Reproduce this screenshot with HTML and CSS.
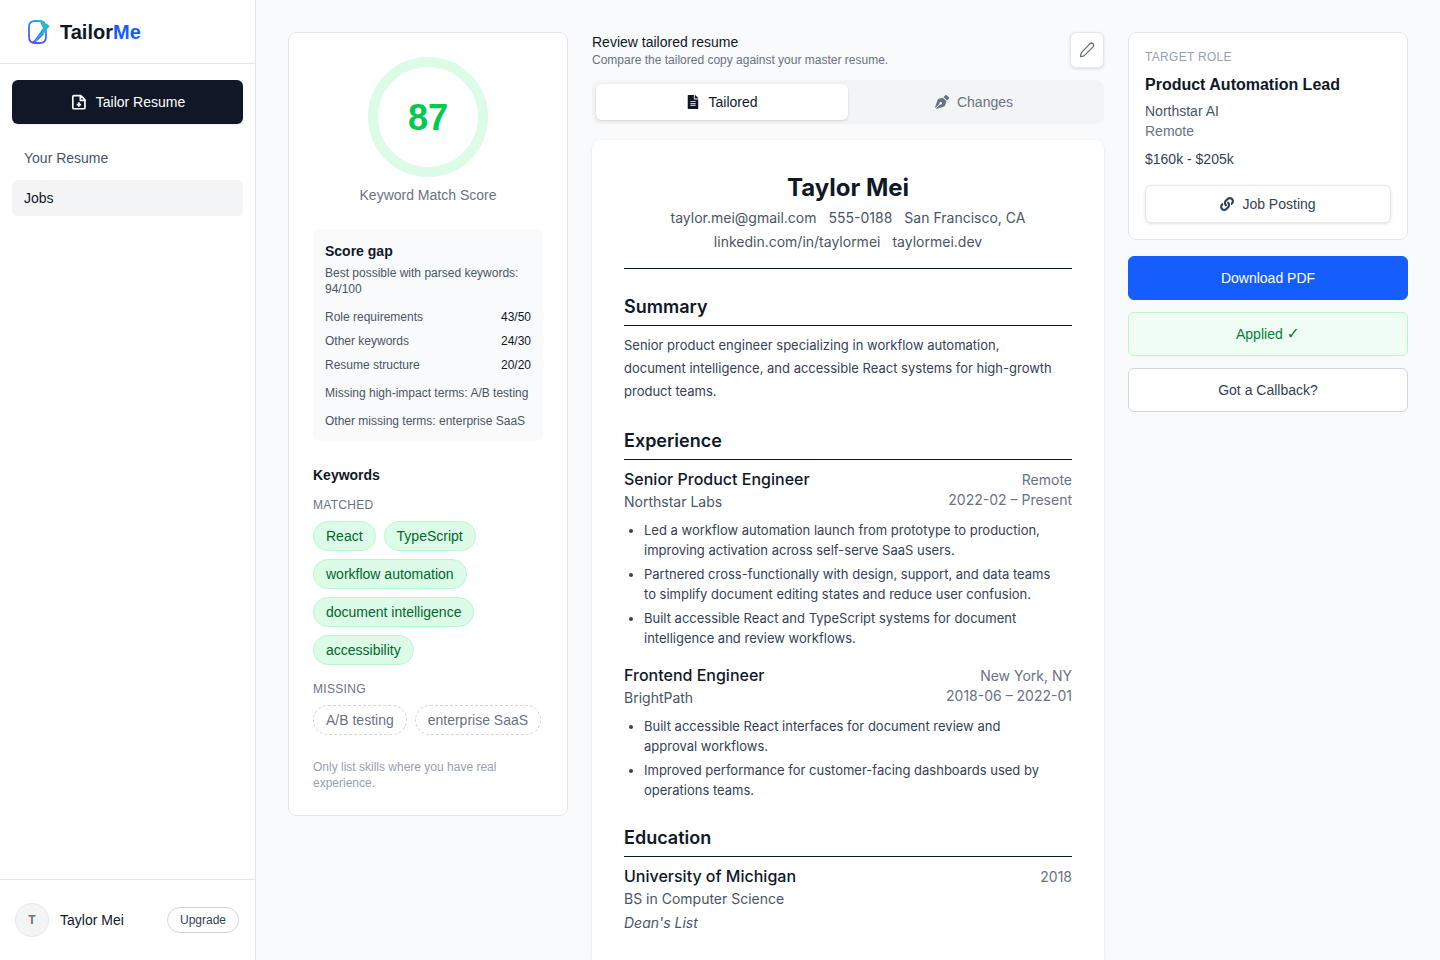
FILE: index.html
```html
<!DOCTYPE html>
<html lang="en">
<head>
<meta charset="utf-8">
<meta name="viewport" content="width=device-width, initial-scale=1">
<title>TailorMe</title>
<link rel="stylesheet" href="styles.css">
</head>
<body>
<div class="app">
  <aside class="sidebar">
    <a class="brand" href="#">
      <svg class="brand-mark" viewBox="0 0 26 26" fill="none" aria-hidden="true">
        <defs>
          <linearGradient id="page" x1="18" y1="2" x2="5" y2="24" gradientUnits="userSpaceOnUse"><stop stop-color="#22b8d8"/><stop offset=".45" stop-color="#2f7df6"/><stop offset="1" stop-color="#6246f5"/></linearGradient>
        </defs>
        <path d="M15 2H9Q3 2 3 8v9.500q0 6.500 6 6.500H14q6 0 6-6v-6.500" stroke="url(#page)" stroke-width="1.800"/>
        <path d="M13 1.100q5.500-.2 6.500 3.500l1.700.4 2.600 2.600-2.200 1.500-.6 2.200L14.500 18q-1.500 1.700-3 2.400L8 23l3-4.600L17 9z" fill="#22b8d8"/>
        <path d="M17 10.500 9.500 20.500q-2 2.700-4 2.800 3 .3 5.500-2l6.500-6.500" stroke="url(#page)" stroke-width="1.100"/>
      </svg>
      <span>Tailor<span class="brand-accent">Me</span></span>
    </a>
    <nav class="nav">
      <a class="nav-primary" href="#">
        <svg class="icon large" viewBox="0 0 16 16" fill="none" stroke="currentColor" stroke-width="1.500" stroke-linejoin="round" aria-hidden="true"><path d="M3.500 2.300h6.200L13.300 6v7a1 1 0 0 1-1 1H3.500a1 1 0 0 1-1-1V3.300a1 1 0 0 1 1-1zM9.200 2.500v4h4M7.900 8.300v4M5.900 10.300h4"/></svg>
        Tailor Resume
      </a>
      <a class="nav-link" href="#">Your Resume</a>
      <a class="nav-link active" href="#" aria-current="page">Jobs</a>
    </nav>
    <div class="account">
      <span class="avatar">T</span>
      <span class="account-name">Taylor Mei</span>
      <button class="upgrade" type="button">Upgrade</button>
    </div>
  </aside>

  <main class="main">
    <section class="card score-card">
      <div class="score-ring">87</div>
      <p class="score-label">Keyword Match Score</p>
      <div class="gap-box">
        <h3>Score gap</h3>
        <p>Best possible with parsed keywords: 94/100</p>
        <dl>
          <div><dt>Role requirements</dt><dd>43/50</dd></div>
          <div><dt>Other keywords</dt><dd>24/30</dd></div>
          <div><dt>Resume structure</dt><dd>20/20</dd></div>
        </dl>
        <p class="terms">Missing high-impact terms: A/B testing</p>
        <p class="terms">Other missing terms: enterprise SaaS</p>
      </div>
      <h3 class="keywords-title">Keywords</h3>
      <h4 class="eyebrow">MATCHED</h4>
      <ul class="chips">
        <li>React</li><li>TypeScript</li><li>workflow automation</li><li>document intelligence</li><li>accessibility</li>
      </ul>
      <h4 class="eyebrow">MISSING</h4>
      <ul class="chips missing"><li>A/B testing</li><li>enterprise SaaS</li></ul>
      <p class="note">Only list skills where you have real experience.</p>
    </section>

    <section class="review">
      <header class="review-head">
        <div>
          <h2>Review tailored resume</h2>
          <p>Compare the tailored copy against your master resume.</p>
        </div>
        <button class="edit" type="button" aria-label="Edit resume">
          <svg class="icon" viewBox="0 0 16 16" fill="none" stroke="currentColor" stroke-width="1.300" stroke-linecap="round" stroke-linejoin="round" aria-hidden="true"><path d="M11 1.800a2.150 2.150 0 0 1 3.100 3.100L5.500 13.400q-.5.500-1.200.7L1.500 14.700l.5-3q.2-.7.700-1.300z"/></svg>
        </button>
      </header>
      <div class="tabs" role="tablist">
        <button class="tab selected" type="button" role="tab" aria-selected="true">
          <svg class="icon small" viewBox="0 0 384 512" aria-hidden="true"><path fill="currentColor" fill-rule="evenodd" d="M224 136V0H24C10.700 0 0 10.700 0 24v464c0 13.300 10.700 24 24 24h336c13.300 0 24-10.700 24-24V160H248c-13.200 0-24-10.800-24-24zM96 224h192v32H96zm0 68h192v32H96zm0 68h192v32H96zM384 122v6H256V0h6c6.400 0 12.500 2.500 17 7l98 98c4.500 4.500 7 10.600 7 17z"/></svg>
          Tailored
        </button>
        <button class="tab" type="button" role="tab" aria-selected="false">
          <svg class="icon small" viewBox="0 0 512 512" aria-hidden="true"><path fill="currentColor" d="M136.600 138.790a64 64 0 0 0-43.310 41.350L0 460l14.690 14.690L164.640 324.740A48.700 48.700 0 0 1 160 304c0-26.510 21.490-48 48-48s48 21.490 48 48-21.490 48-48 48a48.700 48.700 0 0 1-20.740-4.640L37.310 497.310 52 512l279.860-93.290a64 64 0 0 0 41.350-43.310L416 224 288 96l-151.400 42.790zm361.340-64.620l-60.110-60.110c-18.750-18.750-49.160-18.750-67.910 0l-56.550 56.550 128.020 128.020 56.550-56.550c18.750-18.750 18.750-49.160 0-67.910z"/></svg>
          Changes
        </button>
      </div>

      <article class="resume">
        <header class="resume-head">
          <h1>Taylor Mei</h1>
          <div class="contact"><span>taylor.mei@gmail.com</span><span>555-0188</span><span>San Francisco, CA</span></div>
          <div class="contact"><span>linkedin.com/in/taylormei</span><span>taylormei.dev</span></div>
        </header>
        <section>
          <h2>Summary</h2>
          <p class="summary">Senior product engineer specializing in workflow automation,<br>document intelligence, and accessible React systems for high-growth<br>product teams.</p>
        </section>
        <section>
          <h2>Experience</h2>
          <div class="entry">
            <div class="entry-head">
              <div><h3>Senior Product Engineer</h3><p>Northstar Labs</p></div>
              <div class="meta">Remote<br>2022-02 – Present</div>
            </div>
            <ul>
              <li>Led a workflow automation launch from prototype to production,<br>improving activation across self-serve SaaS users.</li>
              <li>Partnered cross-functionally with design, support, and data teams<br>to simplify document editing states and reduce user confusion.</li>
              <li>Built accessible React and TypeScript systems for document<br>intelligence and review workflows.</li>
            </ul>
          </div>
          <div class="entry">
            <div class="entry-head">
              <div><h3>Frontend Engineer</h3><p>BrightPath</p></div>
              <div class="meta">New York, NY<br>2018-06 – 2022-01</div>
            </div>
            <ul>
              <li>Built accessible React interfaces for document review and<br>approval workflows.</li>
              <li>Improved performance for customer-facing dashboards used by<br>operations teams.</li>
            </ul>
          </div>
        </section>
        <section>
          <h2>Education</h2>
          <div class="entry">
            <div class="entry-head">
              <div><h3>University of Michigan</h3><p>BS in Computer Science</p></div>
              <div class="meta">2018</div>
            </div>
            <p class="honor">Dean's List</p>
          </div>
        </section>
      </article>
    </section>

    <aside class="side">
      <section class="card role">
        <h4>TARGET ROLE</h4>
        <h2>Product Automation Lead</h2>
        <p>Northstar AI</p>
        <p class="muted">Remote</p>
        <p class="pay">$160k - $205k</p>
        <a class="posting" href="#">
          <svg class="icon small" viewBox="0 0 512 512" aria-hidden="true"><path fill="currentColor" d="M326.612 185.391c59.747 59.809 58.927 155.698.36 214.590-.11.12-.24.25-.36.37l-67.200 67.200c-59.270 59.270-155.699 59.262-214.960 0-59.270-59.260-59.270-155.700 0-214.960l37.106-37.106c9.840-9.840 26.786-3.300 27.294 10.606.648 17.722 3.826 35.527 9.690 52.721 1.986 5.822.567 12.262-3.783 16.612l-13.087 13.087c-28.026 28.026-28.905 73.660-1.155 101.960 28.024 28.579 74.086 28.749 102.325.51l67.200-67.190c28.191-28.191 28.073-73.757 0-101.830-3.701-3.694-7.429-6.564-10.341-8.569a16.037 16.037 0 0 1-6.947-12.606c-.396-10.567 3.348-21.456 11.698-29.806l21.054-21.055c5.521-5.521 14.182-6.199 20.584-1.731a152.482 152.482 0 0 1 20.522 17.197zM467.547 44.449c-59.261-59.262-155.690-59.270-214.960 0l-67.200 67.200c-.12.12-.25.25-.36.37-58.566 58.892-59.387 154.781.36 214.590a152.454 152.454 0 0 0 20.521 17.196c6.402 4.468 15.064 3.789 20.584-1.731l21.054-21.055c8.350-8.350 12.094-19.239 11.698-29.806a16.037 16.037 0 0 0-6.947-12.606c-2.912-2.005-6.640-4.875-10.341-8.569-28.073-28.073-28.191-73.639 0-101.830l67.200-67.190c28.239-28.239 74.300-28.069 102.325.51 27.750 28.300 26.872 73.934-1.155 101.960l-13.087 13.087c-4.350 4.350-5.769 10.790-3.783 16.612 5.864 17.194 9.042 34.999 9.690 52.721.509 13.906 17.454 20.446 27.294 10.606l37.106-37.106c59.271-59.259 59.271-155.699.001-214.959z"/></svg>
          Job Posting
        </a>
      </section>
      <div class="actions">
        <button class="action download" type="button">Download PDF</button>
        <button class="action applied" type="button">Applied <span class="check">✓</span></button>
        <button class="action" type="button">Got a Callback?</button>
      </div>
    </aside>
  </main>
</div>
</body>
</html>
```
FILE: styles.css
```css
*, *::before, *::after { box-sizing: border-box; }
body, h1, h2, h3, h4, p, ul, dl, dd { margin: 0; }
ul { padding: 0; }
body {
  font: 14px/20px "Liberation Sans", Arial, sans-serif;
  color: #101828;
  background: #f9fafb;
}
a { color: inherit; text-decoration: none; }
button { font: inherit; color: inherit; cursor: pointer; }
.icon { width: 16px; height: 16px; flex: none; }
.icon.small { width: 14px; height: 14px; }
.icon.large { width: 18px; height: 18px; }

.app { display: flex; height: 100vh; overflow: hidden; background: #f8fafc; }

.sidebar {
  flex: none;
  width: 256px;
  display: flex;
  flex-direction: column;
  background: #fff;
  border-right: 1px solid #e5e7eb;
}
.brand {
  display: flex;
  align-items: center;
  gap: 8px;
  height: 64px;
  padding: 0 26px;
  border-bottom: 1px solid #e5e7eb;
  font-size: 20px;
  font-weight: 700;
  line-height: 28px;
}
.brand-mark { width: 26px; height: 26px; }
.brand-accent { color: #155dfc; }
.nav { display: flex; flex-direction: column; gap: 4px; padding: 16px 12px; }
.nav-primary {
  display: flex;
  align-items: center;
  justify-content: center;
  gap: 8px;
  height: 44px;
  margin-bottom: 12px;
  border-radius: 6px;
  background: #101828;
  color: #fff;
  box-shadow: 0 1px 2px rgb(0 0 0 / 8%);
}
.nav-link { padding: 8px 12px; border-radius: 6px; color: #4a5565; }
.nav-link.active { background: #f3f4f6; color: #101828; }
.account {
  display: flex;
  align-items: center;
  height: 81px;
  margin-top: auto;
  padding: 0 16px 0 15px;
  border-top: 1px solid #e5e7eb;
}
.avatar {
  display: grid;
  place-items: center;
  width: 34px;
  height: 34px;
  border: 1px solid #e5e7eb;
  border-radius: 50%;
  background: #f3f4f6;
  color: #6a7282;
  font-size: 12px;
  font-weight: 700;
}
.account-name { margin-left: 11px; }
.upgrade {
  margin-left: auto;
  padding: 4px 12px;
  border: 1px solid #d1d5dc;
  border-radius: 13px;
  background: #fff;
  color: #364153;
  font-size: 12px;
  line-height: 16px;
}

.main {
  flex: 1;
  display: grid;
  grid-template-columns: 280px minmax(0, 1fr) 280px;
  align-items: start;
  gap: 24px;
  padding: 32px;
}
.card { background: #fff; border: 1px solid #e5e7eb; border-radius: 8px; }

.score-card { padding: 24px; }
.score-ring {
  display: grid;
  place-items: center;
  width: 120px;
  height: 120px;
  margin: 0 auto 8px;
  padding-top: 2px;
  border: 10px solid #dcfce7;
  border-radius: 50%;
  color: #00c950;
  font-size: 36px;
  font-weight: 700;
  line-height: 40px;
}
.score-label { color: #6a7282; text-align: center; }
.gap-box {
  margin: 24px 0;
  padding: 12px;
  border-radius: 6px;
  background: #f9fafb;
  color: #4a5565;
  font-size: 12px;
  line-height: 16px;
}
.gap-box h3 { margin-bottom: 4px; color: #101828; font-size: 14px; line-height: 20px; }
.gap-box dl { display: grid; gap: 8px; margin: 12px 0; }
.gap-box dl div { display: flex; justify-content: space-between; }
.gap-box dd { color: #101828; }
.terms { margin-top: 12px; }
.keywords-title { margin-bottom: 12px; font-size: 14px; }
.eyebrow { margin-bottom: 8px; color: #6a7282; font-size: 12px; font-weight: 400; line-height: 16px; letter-spacing: 0.3px; }
.chips { display: flex; flex-wrap: wrap; gap: 8px; margin-bottom: 16px; list-style: none; }
.chips li {
  padding: 4px 12px;
  border: 1px solid #b9f8cf;
  border-radius: 15px;
  background: #dcfce7;
  color: #016630;
}
.chips.missing { margin-bottom: 24px; }
.chips.missing li { border: 1px dashed #d1d5dc; background: none; color: #6a7282; }
.note { color: #99a1af; font-size: 12px; line-height: 16px; }

.review-head { display: flex; align-items: center; justify-content: space-between; margin-bottom: 12px; }
.review-head h2 { font-size: 14px; font-weight: 400; }
.review-head p { color: #6a7282; font-size: 12px; line-height: 16px; }
.edit {
  display: grid;
  place-items: center;
  width: 34px;
  height: 36px;
  padding: 0;
  border: 1px solid #e5e7eb;
  border-radius: 6px;
  background: #fff;
  color: #6a7282;
  box-shadow: 0 1px 3px rgb(0 0 0 / 12%);
}
.tabs {
  display: grid;
  grid-template-columns: 1fr 1fr;
  margin-bottom: 16px;
  padding: 4px;
  border-radius: 8px;
  background: #f3f4f6;
}
.tab {
  display: flex;
  align-items: center;
  justify-content: center;
  gap: 8px;
  padding: 8px;
  border: 0;
  border-radius: 6px;
  background: none;
  color: #6a7282;
}
.tab.selected { background: #fff; color: #101828; box-shadow: 0 1px 3px rgb(0 0 0 / 14%); }

.resume {
  padding: 32px;
  border-radius: 8px;
  background: #fff;
  box-shadow: 0 1px 3px rgb(0 0 0 / 12%);
  font-family: Inter, "Liberation Sans", sans-serif;
  color: #364153;
}
.resume-head { padding-bottom: 16px; border-bottom: 1px solid #101828; text-align: center; }
.resume h1 { margin-bottom: 4px; color: #101828; font-size: 24px; font-weight: 700; line-height: 32px; }
.contact { display: flex; justify-content: center; gap: 12px; margin-bottom: 4px; color: #4a5565; }
.contact:last-child { margin-bottom: 0; }
.resume section { margin-top: 24px; }
.resume section h2 {
  margin-bottom: 8px;
  padding-bottom: 4px;
  border-bottom: 1px solid #101828;
  color: #101828;
  font-size: 18px;
  font-weight: 600;
  line-height: 28px;
}
.summary { font-size: 13px; line-height: 23px; }
.entry + .entry { margin-top: 16px; }
.entry-head { display: flex; justify-content: space-between; gap: 16px; }
.entry h3 { margin-bottom: 2px; color: #101828; font-size: 16px; font-weight: 500; line-height: 22px; }
.entry-head p { color: #4a5565; }
.meta { padding-top: 2px; color: #6a7282; text-align: right; }
.entry ul { display: grid; gap: 4px; margin-top: 8px; padding-left: 20px; font-size: 13px; }
.honor { margin-top: 4px; color: #4a5565; font-style: italic; }

.role { padding: 16px; }
.role h4 { margin-bottom: 8px; color: #99a1af; font-size: 12px; font-weight: 400; line-height: 16px; letter-spacing: 0.3px; }
.role h2 { margin-bottom: 4px; font-size: 16px; line-height: 24px; }
.role p { color: #4a5565; }
.role .muted { color: #6a7282; }
.role .pay { margin: 8px 0 16px; color: #364153; }
.posting {
  display: flex;
  align-items: center;
  justify-content: center;
  gap: 8px;
  padding: 8px;
  border: 1px solid #e5e7eb;
  border-radius: 6px;
  color: #364153;
  box-shadow: 0 1px 3px rgb(0 0 0 / 12%);
}
.actions { display: grid; gap: 12px; margin-top: 16px; }
.action {
  height: 44px;
  border: 1px solid #d1d5dc;
  border-radius: 6px;
  background: #fff;
  color: #364153;
}
.action.download { border-color: #155dfc; background: #155dfc; color: #fff; }
.action.applied { border-color: #b9f8cf; background: #f0fdf4; color: #008236; }
.check { font-family: "DejaVu Sans", sans-serif; font-size: 16px; font-weight: 700; line-height: 16px; }
```
